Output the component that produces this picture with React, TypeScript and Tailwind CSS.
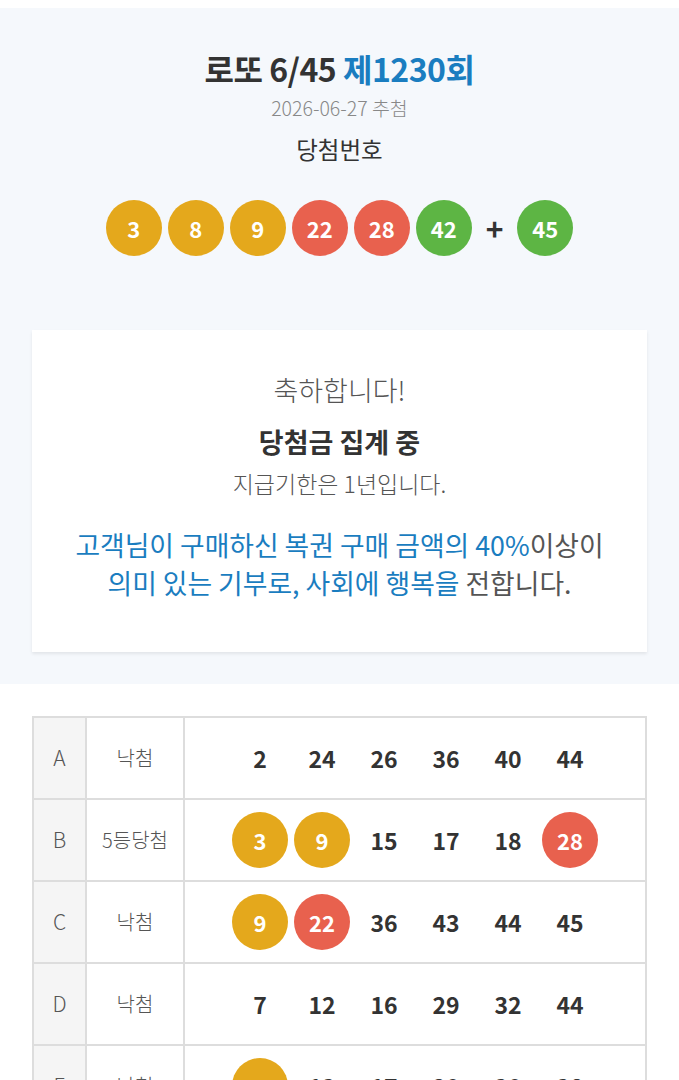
import React from 'react';

type Color = 'gold' | 'red' | 'green';

const BALL: Record<Color, string> = {
  gold: 'bg-[#e4a81c]',
  red: 'bg-[#e8614e]',
  green: 'bg-[#5db544]',
};

const colorOf = (n: number): Color => {
  if (n <= 10) return 'gold';
  if (n <= 30) return 'red';
  return 'green';
};

const winning = [3, 8, 9, 22, 28, 42];
const bonus = 45;

const rows = [
  { key: 'A', result: '낙첨', nums: [2, 24, 26, 36, 40, 44] },
  { key: 'B', result: '5등당첨', nums: [3, 9, 15, 17, 18, 28] },
  { key: 'C', result: '낙첨', nums: [9, 22, 36, 43, 44, 45] },
  { key: 'D', result: '낙첨', nums: [7, 12, 16, 29, 32, 44] },
  { key: 'E', result: '낙첨', nums: [9, 13, 17, 20, 30, 38] },
];

function Ball({ n }: { n: number }) {
  return (
    <div
      className={`w-14 h-14 rounded-full flex items-center justify-center text-white text-[22px] font-bold ${BALL[colorOf(n)]}`}
    >
      {n}
    </div>
  );
}

export default function App() {
  return (
    <div
      className="min-h-screen bg-white pt-2 text-[#333]"
      style={{ fontFamily: '"Noto Sans CJK KR", "Noto Sans", sans-serif' }}
    >
      <section className="bg-[#f5f8fc] pt-10 pb-8">
        <div className="flex flex-col items-center">
          <h1 className="text-[32px] leading-[40px] font-bold tracking-[-0.5px]">
            로또 6/45 <span className="text-[#1a7dc0]">제1230회</span>
          </h1>
          <p className="mt-[7px] text-[19.5px] leading-[26px] text-[#888] font-light">
            2026-06-27 추첨
          </p>
          <p className="mt-[13px] text-[23.5px] leading-[30px]">당첨번호</p>
          <div className="mt-9 flex items-center gap-1.5">
            {winning.map((n) => (
              <Ball key={n} n={n} />
            ))}
            <span className="mx-2 text-[30px] leading-none font-bold text-[#333]">+</span>
            <Ball n={bonus} />
          </div>
        </div>

        <div className="mx-8 mt-[74px] bg-white shadow-[0_2px_3px_rgba(0,0,0,0.08)] pt-[43px] pb-[50px] text-center">
          <p className="text-[27px] leading-[34px] text-[#555] font-light">축하합니다!</p>
          <p className="mt-[18px] text-[27px] leading-[34px] font-bold">당첨금 집계 중</p>
          <p className="mt-[10px] text-[23px] leading-[28px] text-[#555] font-light">
            지급기한은 1년입니다.
          </p>
          <p className="mt-[29px] text-[26.8px] leading-[38px] text-[#555] whitespace-nowrap">
            <span className="text-[#1a7dc0]">고객님이 구매하신 복권 구매 금액의 40%</span>이상이
            <br />
            <span className="text-[#1a7dc0]">의미 있는 기부로, 사회에 행복을</span> 전합니다.
          </p>
        </div>
      </section>

      <div className="mx-8 mt-8 border-2 border-[#ddd]">
        {rows.map((r) => (
          <div key={r.key} className="flex h-[82px] border-b-2 border-[#ddd]">
            <div className="w-[53px] bg-[#f5f5f5] border-r-2 border-[#ddd] flex items-center justify-center text-[21px] text-[#555] font-light">
              {r.key}
            </div>
            <div className="w-[98px] border-r-2 border-[#ddd] flex items-center justify-center text-[20px] text-[#555] font-light">
              {r.result}
            </div>
            <div className="flex-1 flex items-center justify-center gap-1.5">
              {r.nums.map((n) =>
                winning.includes(n) ? (
                  <Ball key={n} n={n} />
                ) : (
                  <div
                    key={n}
                    className="w-14 h-14 flex items-center justify-center text-[23px] font-bold text-[#333]"
                  >
                    {n}
                  </div>
                )
              )}
            </div>
          </div>
        ))}
      </div>
    </div>
  );
}
